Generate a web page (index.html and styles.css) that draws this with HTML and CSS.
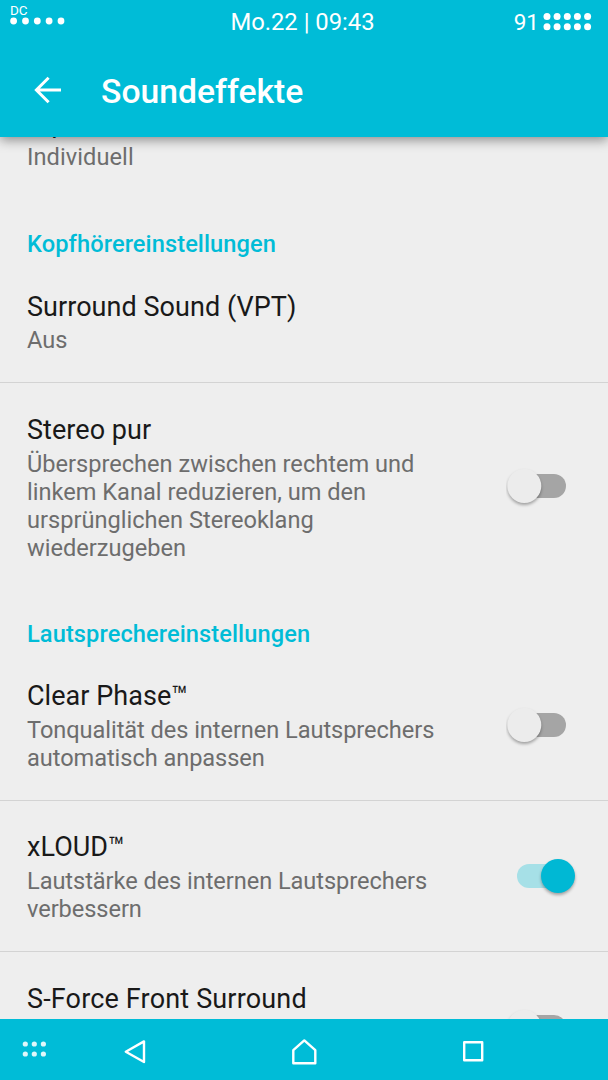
FILE: index.html
```html
<!DOCTYPE html>
<html lang="de">
<head>
<meta charset="utf-8">
<title>Soundeffekte</title>
<link rel="stylesheet" href="styles.css">
</head>
<body>
<div class="screen">
  <header class="header">
    <div class="status">
      <div class="signal">
        <span class="carrier">DC</span>
        <svg class="signal-dots" width="56" height="8" viewBox="0 0 56 8" fill="#fff"><circle cx="3.6" cy="4" r="3.4"/><circle cx="15.5" cy="4" r="3.4"/><circle cx="27.3" cy="4" r="3.4"/><circle cx="39.1" cy="4" r="3.4"/><circle cx="51" cy="4" r="3.4"/></svg>
      </div>
      <span class="clock">Mo.22 | 09:43</span>
      <div class="battery">
        <span class="percent">91</span>
        <svg width="49" height="20" viewBox="0 0 49 20" fill="#fff"><circle cx="4" cy="4.6" r="3.5"/><circle cx="14.1" cy="4.6" r="3.5"/><circle cx="24.3" cy="4.6" r="3.5"/><circle cx="34.4" cy="4.6" r="3.5"/><circle cx="44.6" cy="4.6" r="3.5"/><circle cx="4" cy="14.8" r="3.5"/><circle cx="14.1" cy="14.8" r="3.5"/><circle cx="24.3" cy="14.8" r="3.5"/><circle cx="34.4" cy="14.8" r="3.5"/><circle cx="44.6" cy="14.8" r="3.5"/></svg>
      </div>
    </div>
    <div class="toolbar">
      <svg class="back" width="28" height="28" viewBox="0 0 28 28" fill="none" stroke="#fff" stroke-width="3"><path d="M27 14H3M14.6 1.8L2.4 14L14.6 26.2"/></svg>
      <h1 class="heading">Soundeffekte</h1>
    </div>
  </header>

  <main class="list">
    <div class="row row-first"><div class="text"><div class="title">Equalizer</div><div class="summary">Individuell</div></div></div>
    <h2 class="category">Kopfhörereinstellungen</h2>
    <div class="row row-surround divided"><div class="text"><div class="title">Surround Sound (VPT)</div><div class="summary">Aus</div></div></div>
    <div class="row row-stereo">
      <div class="text"><div class="title">Stereo pur</div><div class="summary">Übersprechen zwischen rechtem und<br>linkem Kanal reduzieren, um den<br>ursprünglichen Stereoklang<br>wiederzugeben</div></div>
      <svg class="switch off" width="72" height="44" viewBox="0 0 72 44"><rect class="track" x="11" y="8" width="49" height="24" rx="12"/><circle class="thumb" cx="18.3" cy="20" r="17"/></svg>
    </div>
    <h2 class="category category-speaker">Lautsprechereinstellungen</h2>
    <div class="row row-phase divided">
      <div class="text"><div class="title">Clear Phase™</div><div class="summary">Tonqualität des internen Lautsprechers<br>automatisch anpassen</div></div>
      <svg class="switch off" width="72" height="44" viewBox="0 0 72 44"><rect class="track" x="11" y="8" width="49" height="24" rx="12"/><circle class="thumb" cx="18.3" cy="20" r="17"/></svg>
    </div>
    <div class="row row-loud divided">
      <div class="text"><div class="title">xLOUD™</div><div class="summary">Lautstärke des internen Lautsprechers<br>verbessern</div></div>
      <svg class="switch on" width="72" height="44" viewBox="0 0 72 44"><rect class="track" x="11" y="8" width="49" height="24" rx="12"/><circle class="thumb" cx="52" cy="20" r="17"/></svg>
    </div>
    <div class="row row-force">
      <div class="text"><div class="title">S-Force Front Surround</div></div>
      <svg class="switch off" width="72" height="44" viewBox="0 0 72 44"><rect class="track" x="11" y="8" width="49" height="24" rx="12"/><circle class="thumb" cx="18.3" cy="20" r="17"/></svg>
    </div>
  </main>

  <nav class="nav">
    <svg class="nav-apps" width="26" height="18" viewBox="0 0 26 18" fill="#fff" fill-opacity=".88"><circle cx="3.3" cy="4" r="2.6"/><circle cx="12.3" cy="4" r="2.6"/><circle cx="21.4" cy="4" r="2.6"/><circle cx="3.3" cy="14" r="2.6"/><circle cx="12.3" cy="14" r="2.6"/><circle cx="21.4" cy="14" r="2.6"/></svg>
    <svg class="nav-back" width="24" height="26" viewBox="0 0 24 26" fill="none" stroke="#fff" stroke-width="2.4" stroke-linejoin="round"><path d="M21 2.4V23L2.8 12.7Z"/></svg>
    <svg class="nav-home" width="28" height="28" viewBox="0 0 28 28" fill="none" stroke="#fff" stroke-width="2.4" stroke-linejoin="round"><path d="M2.3 25.2V12.2L13.3 2.4L24.3 12.2V25.2Z"/></svg>
    <svg class="nav-recent" width="22" height="22" viewBox="0 0 22 22" fill="none" stroke="#fff" stroke-width="2.4" stroke-linejoin="round"><path d="M2.2 2.3H20.2V20.3H2.2Z"/></svg>
  </nav>
</div>
</body>
</html>
```
FILE: styles.css
```css
* { box-sizing: border-box; }
body { margin: 0; font-family: Roboto, "Noto Sans", sans-serif; background: #eee; }
.screen { display: flex; flex-direction: column; width: 608px; height: 1080px; overflow: hidden; background: #eee; }

.header { position: relative; z-index: 1; flex: none; height: 136.5px; background: #00bcd7; color: #fff; box-shadow: 0 3px 11px rgba(0, 0, 0, .42); }
.status { display: grid; grid-template-columns: 1fr auto 1fr; height: 44px; padding: 0 16px 0 10px; }
.signal { display: flex; flex-direction: column; }
.carrier { height: 17px; padding-top: 2px; font-size: 13.5px; line-height: 16px; }
.clock { padding-left: 3px; font-size: 23.8px; line-height: 45px; white-space: pre; }
.battery { display: flex; justify-content: flex-end; gap: 4px; font-size: 22.5px; line-height: 44px; }
.battery svg { margin-top: 12px; }
.toolbar { display: flex; align-items: flex-start; padding-left: 33.5px; }
.back { margin-top: 31.5px; }
.heading { margin: 28px 0 0 39.5px; font-size: 33.7px; font-weight: 500; line-height: 40px; }

.list { flex: 1; min-height: 0; overflow: hidden; }
.row { display: flex; justify-content: space-between; padding: 0 30px 0 27px; }
.divided { border-bottom: 1px solid #d3d3d3; }
.title { font-size: 27px; line-height: 32px; letter-spacing: .05px; color: #191919; white-space: nowrap; }
.summary { margin-top: 4px; font-size: 23.6px; line-height: 27.9px; color: #6d6d6d; white-space: nowrap; }
.category { height: 60px; margin: 0; padding-left: 27px; font-size: 23.6px; font-weight: 500; line-height: 28px; letter-spacing: .1px; color: #00bcd7; }
.category-speaker { height: 59px; }
.row-first { height: 93.5px; }
.row-first .title { margin-top: -29.5px; }
.row-first .summary { margin-top: 5px; letter-spacing: .07px; }
.row-surround { height: 93px; }
.row-surround .text { padding-top: 1px; }
.row-stereo { height: 237px; padding-top: 31px; }
.row-stereo .summary { margin-top: 5px; }
.row-phase { height: 122px; }
.row-phase .text, .row-loud .text { padding-top: 1px; }
.row-phase .summary, .row-loud .summary { margin-top: 5px; letter-spacing: -.06px; }
.row-loud { height: 151px; padding-top: 29px; }
.row-force { height: 100px; padding-top: 30px; }
.row-force .title { padding-top: 1px; letter-spacing: .16px; }

.switch { flex: none; margin-top: 26px; }
.row-stereo .switch { margin-top: 52px; }
.row-force .switch { margin-top: 25px; }
.thumb { filter: drop-shadow(0 2px 1.5px rgba(0, 0, 0, .32)); }
.off .track { fill: #a5a5a5; }
.off .thumb { fill: #ececec; }
.on .track { fill: #a6e0e7; }
.on .thumb { fill: #00b8d4; }

.nav { position: relative; display: grid; grid-template-columns: 101px 168px 169px 1fr; flex: none; height: 61px; padding-left: 22px; background: #00bcd7; }
.nav-apps { margin-top: 21px; }
.nav-back { margin-top: 20px; }
.nav-home { margin-top: 19px; }
.nav-recent { margin-top: 21px; margin-left: 2px; }
```
